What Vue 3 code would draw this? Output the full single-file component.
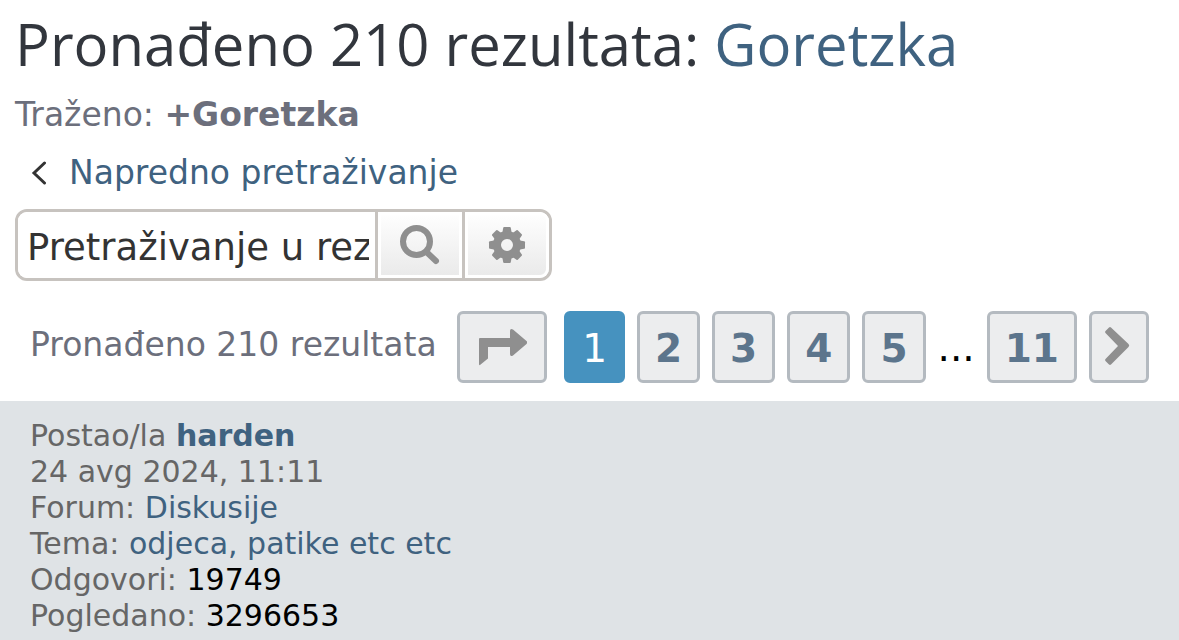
<script setup>
import { ref } from 'vue'

const query = ref('')
const pages = [2, 3, 4, 5]
</script>

<template>
  <main class="page">
    <header class="intro">
      <h1 class="title">Pronađeno 210 rezultata: <a href="#">Goretzka</a></h1>
      <p class="line">Traženo: <strong>+Goretzka</strong></p>
      <p class="line back">
        <svg class="back-icon" viewBox="0 0 16 24" aria-hidden="true">
          <path d="M13.5 2 3 12l10.5 10" />
        </svg>
        <a href="#">Napredno pretraživanje</a>
      </p>
      <form class="search" @submit.prevent>
        <input v-model="query" class="field" type="text" aria-label="Pretraživanje" placeholder="Pretraživanje u rez" />
        <button class="tool" type="submit" aria-label="Traži">
          <svg class="tool-icon" viewBox="0 0 40 40" aria-hidden="true">
            <circle cx="16.500" cy="16.500" r="13.5" fill="none" stroke="#8f8f8f" stroke-width="6" />
            <path d="m26.5 27 9.5 9" fill="none" stroke="#8f8f8f" stroke-width="6" stroke-linecap="round" />
          </svg>
        </button>
        <button class="tool last" type="button" aria-label="Napredno">
          <svg class="tool-icon" viewBox="-20 -20 40 40" aria-hidden="true">
            <g fill="#8f8f8f">
              <path v-for="n in 8" :key="n" :transform="`rotate(${n * 45})`" d="M-5-10-3.8-17.2Q-3.6-18-2.8-18h5.600q.8 0 1 .8L5-10z" />
            </g>
            <circle r="10" fill="none" stroke="#8f8f8f" stroke-width="8" />
          </svg>
        </button>
      </form>
    </header>

    <nav class="pagination" aria-label="Stranice">
      <span class="count">Pronađeno 210 rezultata</span>
      <button class="page-button jump" type="button" aria-label="Idi na stranicu">
        <svg class="jump-icon" viewBox="0 0 50 38" aria-hidden="true">
          <path d="M3 10h30V3q0-3 3-1.500L49.500 13q1.500 1.500 0 3L36 27.500Q33 29 33 26V19H11v11.500L3 37q-1 .5-1-1V11q0-1 1-1z" />
        </svg>
      </button>
      <span class="page-button current" aria-current="page">1</span>
      <a v-for="page in pages" :key="page" class="page-button" href="#">{{ page }}</a>
      <span class="dots">...</span>
      <a class="page-button" href="#">11</a>
      <a class="page-button next" href="#" aria-label="Sljedeća">
        <svg class="next-icon" viewBox="2 1 26 40" aria-hidden="true">
          <path d="M7 1.500 24.500 18q1.500 1.500 0 3L7 38.500q-1 .8-2 0l-3.500-3.500q-1-1 0-2L14 20 1.500 7q-1-1 0-2L5 1.500q1-.8 2 0z" />
        </svg>
      </a>
    </nav>

    <article class="post">
      <dl class="details">
        <div><dt>Postao/la</dt> <dd><a class="author" href="#">harden</a></dd></div>
        <div>24 avg 2024, 11:11</div>
        <div><dt>Forum:</dt> <dd><a href="#">Diskusije</a></dd></div>
        <div><dt>Tema:</dt> <dd><a href="#">odjeca, patike etc etc</a></dd></div>
        <div><dt>Odgovori:</dt> <dd>19749</dd></div>
        <div><dt>Pogledano:</dt> <dd>3296653</dd></div>
      </dl>
    </article>
  </main>
</template>

<style>
body {
  background: #fff;
}
</style>

<style scoped>
.page {
  color: #6c6f7c;
  font-family: Verdana, "DejaVu Sans", sans-serif;
  font-size: 33px;
}
a {
  color: #3f6280;
  text-decoration: none;
}
.intro {
  padding: 8px 15px 0;
}
.title {
  margin: 0;
  color: #32363d;
  font-family: "Trebuchet MS", "Open Sans", sans-serif;
  font-size: 58px;
  font-weight: 400;
  line-height: 72px;
}
.line {
  margin: 6px 0 0;
  line-height: 58px;
}
.back {
  display: flex;
  align-items: center;
  gap: 22px;
  margin: 0 0 7px 16px;
}
.back-icon {
  width: 16px;
  height: 24px;
  fill: none;
  stroke: #333;
  stroke-width: 3;
  stroke-linecap: round;
}
.search {
  display: flex;
  box-sizing: border-box;
  width: 537px;
  max-width: 100%;
  height: 72px;
  border: 3px solid #c7c3bf;
  border-radius: 12px;
  overflow: hidden;
}
.field {
  flex: 1;
  min-width: 0;
  padding: 4px 6px 0 9px;
  border: 0;
  outline: 0;
  background: #fff;
  color: #333;
  font: inherit;
  font-size: 37px;
  appearance: none;
}
.field::placeholder {
  color: #333;
  opacity: 1;
}
.tool {
  display: flex;
  align-items: center;
  justify-content: center;
  box-sizing: content-box;
  width: 84px;
  padding: 0;
  border: 0;
  border-left: 3px solid #c7c3bf;
  background: linear-gradient(#fff, #e9e9e9);
  background-clip: padding-box;
  box-shadow: inset 0 0 0 3px #fff;
}
.tool.last {
  border-radius: 0 9px 9px 0;
}
.tool-icon {
  width: 40px;
  height: 40px;
}
.pagination {
  display: flex;
  align-items: center;
  gap: 12px;
  padding: 30px 30px 18px;
}
.count {
  margin-right: auto;
  line-height: 40px;
  padding-bottom: 4px;
}
.page-button {
  display: flex;
  align-items: center;
  justify-content: center;
  box-sizing: border-box;
  height: 72px;
  padding: 2px 15px 0;
  border: 3px solid #b4bac0;
  border-radius: 6px;
  background: #ecedee;
  color: #5c758c;
  font-size: 39px;
  font-weight: 700;
}
.current {
  border-color: #4692bf;
  background: #4692bf;
  color: #fff;
  font-weight: 400;
}
.jump {
  width: 90px;
  margin-right: 5px;
  padding-top: 0;
}
.jump-icon {
  flex: none;
  width: 50px;
  height: 38px;
  fill: #8f8f8f;
}
.next {
  width: 60px;
  padding-top: 0;
}
.next-icon {
  flex: none;
  width: 26px;
  height: 40px;
  fill: #8f8f8f;
  overflow: visible;
}
.dots {
  color: #000;
  font-size: 39px;
}
.post {
  padding: 17px 30px 6px;
  background: #dfe3e6;
}
.details {
  margin: 0;
  color: #666;
  font-size: 30px;
  line-height: 36px;
}
.details dt,
.details dd {
  display: inline;
  margin: 0;
}
.details dd {
  color: #000;
}
.author {
  font-weight: 700;
}
</style>
